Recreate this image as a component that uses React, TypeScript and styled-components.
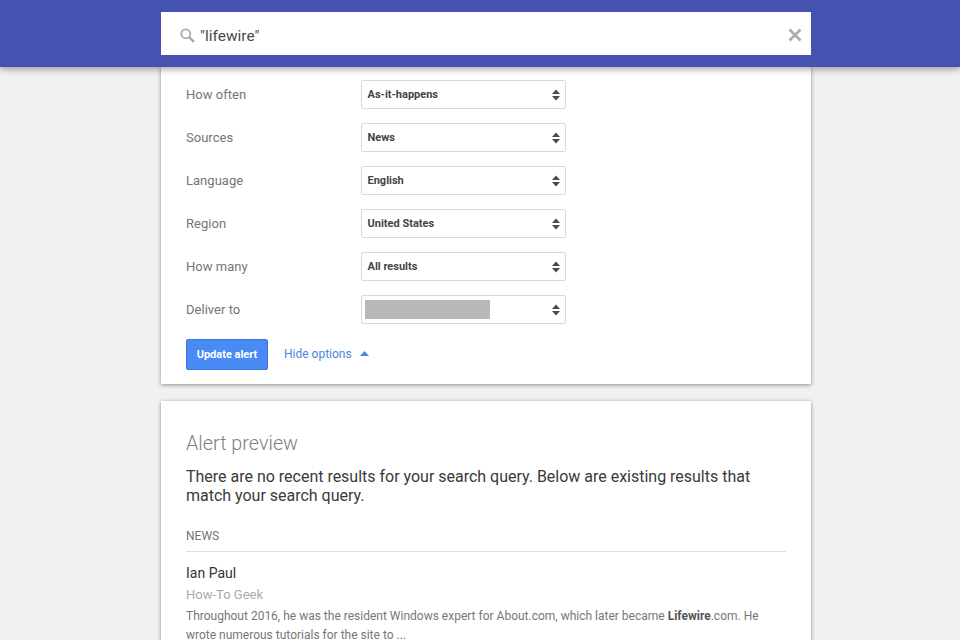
import React from "react";
import styled, { createGlobalStyle } from "styled-components";

const Global = createGlobalStyle`
  html, body { margin: 0; padding: 0; height: 640px; overflow: hidden; background: #f1f1f1; }
  body { font-family: Roboto, "Liberation Sans", sans-serif; }
`;

const Page = styled.div`
  width: 960px;
  height: 640px;
  overflow: hidden;
  background: #f1f1f1;
`;

const Header = styled.header`
  position: relative;
  z-index: 2;
  height: 67px;
  box-sizing: border-box;
  padding-top: 12px;
  background: #4552b0;
  box-shadow: 0 2px 7px rgba(0, 0, 0, 0.38);
`;

const SearchBox = styled.div`
  width: 650px;
  height: 43px;
  margin-left: 161px;
  background: #fff;
  display: flex;
  align-items: center;
  padding: 0 9px 0 19px;
  box-sizing: border-box;
  svg { margin-top: 3px; }
`;

const Query = styled.div`
  flex: 1;
  margin: 4px 0 0 5px;
  font-size: 15.5px;
  color: #4a4a4a;
`;

const Main = styled.main`
  width: 650px;
  margin-left: 161px;
  display: flex;
  flex-direction: column;
  gap: 17px;
`;

const Card = styled.section`
  background: #fff;
  box-shadow: 0 1px 4px rgba(0, 0, 0, 0.42);
`;

const OptionsCard = styled(Card)`
  height: 317px;
  box-sizing: border-box;
  padding: 13px 25px 0;
`;

const Row = styled.div`
  display: flex;
  align-items: center;
  height: 29px;
  margin-bottom: 14px;
`;

const Label = styled.div`
  width: 175px;
  font-size: 13px;
  color: #757575;
  letter-spacing: 0.02px;
`;

const Select = styled.div`
  width: 205px;
  height: 29px;
  box-sizing: border-box;
  border: 1px solid #d9d9d9;
  border-radius: 2px;
  display: flex;
  align-items: center;
  justify-content: space-between;
  padding: 0 5px 0 5.5px;
  font-size: 11px;
  font-weight: 700;
  color: #444;
`;

const Redacted = styled.div`
  width: 125px;
  height: 19px;
  margin-left: -2.5px;
  background: #b8b8b8;
`;

const Actions = styled.div`
  display: flex;
  align-items: center;
  margin-top: 15px;
`;

const PrimaryButton = styled.button`
  width: 82px;
  height: 31px;
  box-sizing: border-box;
  padding: 0;
  background: #4a8af4;
  border: 1px solid #3b78e7;
  border-radius: 2px;
  color: #fff;
  font: 700 11px Roboto, sans-serif;
`;

const ToggleLink = styled.a`
  margin: 0 0 2px 16px;
  display: flex;
  align-items: center;
  gap: 8px;
  font-size: 12px;
  color: #4a86e0;
`;

const PreviewCard = styled(Card)`
  padding: 32px 25px 0;
  height: 300px;
  box-sizing: border-box;
`;

const PreviewTitle = styled.h2`
  margin: 0;
  font-size: 19.8px;
  line-height: 22px;
  font-weight: 300;
  color: #808080;
`;

const Message = styled.p`
  margin: 12px 0 0;
  font-size: 16px;
  line-height: 19px;
  color: #3a3a3a;
  letter-spacing: -0.01px;
`;

const SectionHead = styled.div`
  margin-top: 24px;
  padding-bottom: 7px;
  border-bottom: 1px solid #e0e0e0;
  font-size: 12px;
  line-height: 15px;
  color: #757575;
`;

const Author = styled.div`
  margin-top: 12px;
  font-size: 14px;
  line-height: 18px;
  color: #333;
`;

const Publisher = styled.div`
  margin-top: 4px;
  font-size: 13px;
  line-height: 18px;
  color: #aaa;
`;

const Snippet = styled.p`
  margin: 3px 0 0;
  font-size: 12px;
  line-height: 19px;
  color: #777;
  b { color: #555; }
`;

const SortArrows = () => (
  <svg width="8" height="12" viewBox="0 0 8 12" fill="#4a4a4a">
    <path d="M4 0.5 L8 5 H0 Z" />
    <path d="M0 7 H8 L4 11.5 Z" />
  </svg>
);

const SearchIcon = () => (
  <svg width="15" height="15" viewBox="0 0 15 15" fill="none" stroke="#aaa">
    <circle cx="5.8" cy="5.8" r="4.5" strokeWidth="1.8" />
    <path d="M9.2 9.2 L14 14" strokeWidth="2.4" />
  </svg>
);

const CloseIcon = () => (
  <svg width="14" height="14" viewBox="0 0 14 14" stroke="#aaa" strokeWidth="2.6">
    <path d="M1.5 1.5 L12.5 12.5 M12.5 1.5 L1.5 12.5" />
  </svg>
);

const UpTriangle = () => (
  <svg width="9" height="5" viewBox="0 0 9 5" fill="#4a86e0">
    <path d="M4.5 0 L9 5 H0 Z" />
  </svg>
);

const options = [
  { label: "How often", value: "As-it-happens" },
  { label: "Sources", value: "News" },
  { label: "Language", value: "English" },
  { label: "Region", value: "United States" },
  { label: "How many", value: "All results" },
  { label: "Deliver to", value: "" },
];

export default function App() {
  return (
    <Page>
      <Global />
      <Header>
        <SearchBox>
          <SearchIcon />
          <Query>"lifewire"</Query>
          <CloseIcon />
        </SearchBox>
      </Header>
      <Main>
        <OptionsCard>
          {options.map((o) => (
            <Row key={o.label}>
              <Label>{o.label}</Label>
              <Select>
                {o.value ? <span>{o.value}</span> : <Redacted />}
                <SortArrows />
              </Select>
            </Row>
          ))}
          <Actions>
            <PrimaryButton>Update alert</PrimaryButton>
            <ToggleLink>
              Hide options <UpTriangle />
            </ToggleLink>
          </Actions>
        </OptionsCard>
        <PreviewCard>
          <PreviewTitle>Alert preview</PreviewTitle>
          <Message>
            There are no recent results for your search query. Below are existing results that
            match your search query.
          </Message>
          <SectionHead>NEWS</SectionHead>
          <Author>Ian Paul</Author>
          <Publisher>How-To Geek</Publisher>
          <Snippet>
            Throughout 2016, he was the resident Windows expert for About.com, which later became{" "}
            <b>Lifewire</b>.com. He
            <br />
            wrote numerous tutorials for the site to ...
          </Snippet>
        </PreviewCard>
      </Main>
    </Page>
  );
}
